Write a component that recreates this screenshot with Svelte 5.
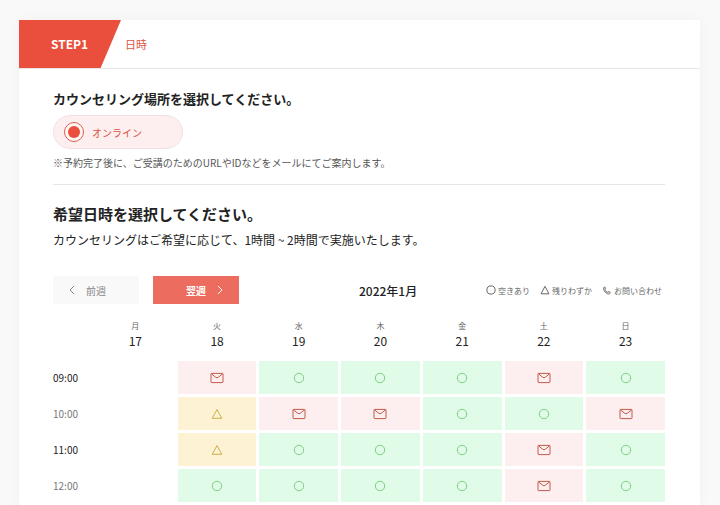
<script lang="ts">
  type Status = 'none' | 'open' | 'few' | 'mail';

  const days = [
    { name: '月', date: 17 },
    { name: '火', date: 18 },
    { name: '水', date: 19 },
    { name: '木', date: 20 },
    { name: '金', date: 21 },
    { name: '土', date: 22 },
    { name: '日', date: 23 },
  ];

  const rows: { time: string; slots: Status[] }[] = [
    { time: '09:00', slots: ['none', 'mail', 'open', 'open', 'open', 'mail', 'open'] },
    { time: '10:00', slots: ['none', 'few', 'mail', 'mail', 'open', 'open', 'mail'] },
    { time: '11:00', slots: ['none', 'few', 'open', 'open', 'open', 'mail', 'open'] },
    { time: '12:00', slots: ['none', 'open', 'open', 'open', 'open', 'mail', 'open'] },
  ];

  const labels: Record<Status, string> = {
    none: '',
    open: '空きあり',
    few: '残りわずか',
    mail: 'お問い合わせ',
  };

  let place = $state('online');
</script>

{#snippet mark(status: Status)}
  {#if status === 'open'}
    <svg width="12" height="12" viewBox="0 0 12 12" aria-hidden="true">
      <circle cx="6" cy="6" r="4.7" />
    </svg>
  {:else if status === 'few'}
    <svg width="12" height="12" viewBox="0 0 12 12" aria-hidden="true">
      <path d="M6 1.6 10.8 10.3H1.2Z" />
    </svg>
  {:else if status === 'mail'}
    <svg width="14" height="12" viewBox="0 0 14 12" aria-hidden="true">
      <rect x="1" y="1.4" width="12" height="9.2" rx="0.6" />
      <path d="M1.4 1.8 5.6 5.2Q7 6.4 8.4 5.2L12.6 1.8" />
    </svg>
  {/if}
{/snippet}

<div class="page">
  <main class="card">
    <header class="steps">
      <span class="step-tag">STEP1</span>
      <span class="step-name">日時</span>
    </header>

    <div class="body">
      <section class="place">
        <h2>カウンセリング場所を選択してください。</h2>
        <label class="choice">
          <input type="radio" name="place" value="online" bind:group={place} />
          オンライン
        </label>
        <p class="note">※予約完了後に、ご受講のためのURLやIDなどをメールにてご案内します。</p>
      </section>

      <section class="schedule">
        <h1>希望日時を選択してください。</h1>
        <p class="lead">カウンセリングはご希望に応じて、1時間 ~ 2時間で実施いたします。</p>

        <div class="toolbar">
          <div class="week-nav">
            <button type="button" class="prev">
              <svg width="6" height="10" viewBox="0 0 6 10" aria-hidden="true"><path d="M5 1 1 5l4 4" /></svg>
              前週
            </button>
            <button type="button" class="next">
              翌週
              <svg width="6" height="10" viewBox="0 0 6 10" aria-hidden="true"><path d="m1 1 4 4-4 4" /></svg>
            </button>
          </div>
          <div class="month-bar">
            <strong class="month">2022年1月</strong>
            <ul class="legend">
              <li>
                <svg width="10" height="10" viewBox="0 0 10 10" aria-hidden="true"><circle cx="5" cy="5" r="4.1" /></svg>
                空きあり
              </li>
              <li>
                <svg width="10" height="10" viewBox="0 0 10 10" aria-hidden="true"><path d="M5 1.3 9 8.8H1Z" /></svg>
                残りわずか
              </li>
              <li>
                <svg width="10" height="10" viewBox="0 0 10 10" aria-hidden="true">
                  <path class="phone" d="M2.2 2 3.4 2.4 3.6 4.1 2.9 4.7Q3.6 6.4 5.3 7.2L6.2 6.4 8.2 7.2 8 8.6Q6.8 9.5 5 8.6 2.4 7.3 1.6 4.6 1.2 2.8 2.2 2Z" />
                </svg>
                お問い合わせ
              </li>
            </ul>
          </div>
        </div>

        <table>
          <thead>
            <tr>
              <td class="corner"></td>
              {#each days as day}
                <th scope="col">
                  <span class="weekday">{day.name}</span>
                  <span class="date">{day.date}</span>
                </th>
              {/each}
            </tr>
          </thead>
          <tbody>
            {#each rows as row}
              <tr>
                <th scope="row">{row.time}</th>
                {#each row.slots as status, i}
                  <td>
                    {#if status !== 'none'}
                      <button
                        type="button"
                        class="slot {status}"
                        aria-label="{days[i].date}日 {row.time} {labels[status]}"
                      >
                        {@render mark(status)}
                      </button>
                    {/if}
                  </td>
                {/each}
              </tr>
            {/each}
          </tbody>
        </table>
      </section>
    </div>
  </main>
</div>

<style>
  :global(body) {
    background: #f9f9f9;
  }

  .page {
    display: flex;
    flex-direction: column;
    box-sizing: border-box;
    min-height: 100vh;
    padding: 20px 20px 0 19px;
    font-family: 'Noto Sans CJK JP', sans-serif;
    font-size: 10px;
    color: #222;
  }

  h1,
  h2,
  p,
  ul {
    margin: 0;
    padding: 0;
  }

  button {
    padding: 0;
    border: 0;
    font: inherit;
    cursor: pointer;
  }

  svg {
    flex: none;
    fill: none;
    stroke: currentColor;
    stroke-width: 1;
  }

  .card {
    flex: 1;
    background: #fff;
    box-shadow: 0 0 12px rgba(0, 0, 0, 0.04);
  }

  .steps {
    display: flex;
    align-items: center;
    height: 48px;
    border-bottom: 1px solid #e6e6e6;
  }

  .step-tag {
    box-sizing: border-box;
    width: 102px;
    padding-left: 32px;
    background: #ea4e3d;
    clip-path: polygon(0 0, 100% 0, 80% 100%, 0 100%);
    color: #fff;
    font-size: 12px;
    font-weight: 700;
    line-height: 48px;
  }

  .step-name {
    margin-left: 4px;
    color: #dc5546;
    font-size: 11px;
  }

  .body {
    padding: 0 35px 0 34px;
  }

  .place {
    padding: 20px 0 13px;
    border-bottom: 1px solid #e6e6e6;
  }

  h2 {
    font-size: 13px;
    font-weight: 700;
    line-height: 20px;
  }

  .choice {
    display: flex;
    align-items: center;
    gap: 8px;
    box-sizing: border-box;
    width: 130px;
    height: 34px;
    margin: 6px 0;
    padding: 0 10px;
    border: 1px solid #f1e2e5;
    border-radius: 17px;
    background: #fdefef;
    color: #dc5546;
    cursor: pointer;
  }

  .choice input {
    appearance: none;
    display: grid;
    place-items: center;
    width: 20px;
    height: 20px;
    margin: 0;
    border: 1px solid #d9604f;
    border-radius: 50%;
    background: #fff5f4;
  }

  .choice input:checked::before {
    content: '';
    width: 12px;
    height: 12px;
    border-radius: 50%;
    background: #ea4e3d;
  }

  .note {
    color: #555;
    line-height: 16px;
  }

  .schedule {
    padding-top: 18px;
  }

  h1 {
    font-size: 15px;
    font-weight: 700;
    line-height: 22px;
  }

  .lead {
    margin-top: 5px;
    font-size: 12px;
    line-height: 20px;
  }

  .toolbar {
    display: grid;
    grid-template-columns: 1fr 1fr;
    align-items: center;
    margin-top: 26px;
  }

  .week-nav {
    display: flex;
    gap: 14px;
  }

  .week-nav button {
    display: flex;
    align-items: center;
    gap: 11px;
    box-sizing: border-box;
    width: 86px;
    height: 28px;
    padding: 0 16px;
  }

  .prev {
    background: #f9f9f9;
    color: #888;
  }

  .week-nav .next {
    justify-content: flex-end;
    background: #ec6d5f;
    color: #fff;
    font-weight: 700;
  }

  .month-bar {
    display: flex;
    align-items: center;
    justify-content: space-between;
  }

  .month {
    font-size: 12px;
    font-weight: 500;
  }

  .legend {
    display: flex;
    gap: 10px;
    padding-right: 3px;
    color: #666;
    font-size: 8px;
    list-style: none;
  }

  .legend li {
    display: flex;
    align-items: center;
    gap: 2px;
  }

  .phone {
    fill: #ccc;
    stroke: #888;
  }

  table {
    width: 100%;
    margin-top: 16px;
    border-spacing: 0;
    table-layout: fixed;
  }

  th,
  td {
    padding: 0 0 3px 3px;
    font-weight: 400;
  }

  tbody tr:last-child > * {
    padding-bottom: 0;
  }

  .corner {
    width: 37px;
  }

  thead th {
    height: 41px;
    padding-bottom: 0;
    vertical-align: top;
  }

  .weekday,
  .date {
    display: block;
  }

  .weekday {
    color: #666;
    font-size: 8px;
    line-height: 12px;
  }

  .date {
    font-size: 12px;
    line-height: 18px;
  }

  tbody th {
    padding-left: 0;
    color: #777;
    text-align: left;
  }

  tbody tr:nth-child(odd) th {
    color: #222;
  }

  .slot {
    display: flex;
    align-items: center;
    justify-content: center;
    width: 100%;
    height: 33px;
  }

  .open {
    background: #e1fbe9;
    color: #7ccf83;
  }

  .few {
    background: #fdf2d3;
    color: #cdb04a;
  }

  .mail {
    background: #fdeff0;
    color: #c25a48;
  }
</style>
